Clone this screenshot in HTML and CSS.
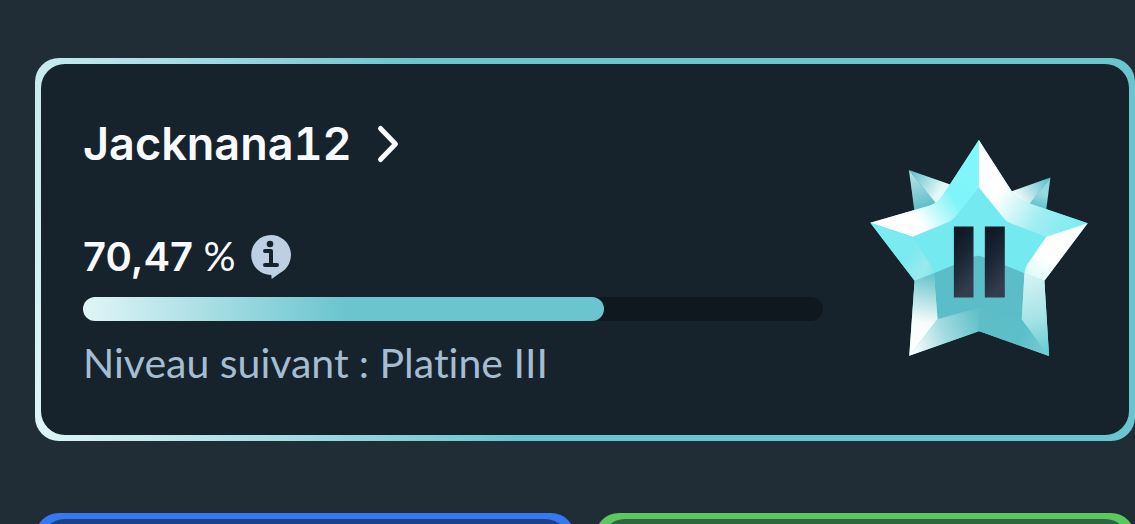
FILE: index.html
```html
<!DOCTYPE html>
<html lang="fr">
<head>
<meta charset="utf-8">
<meta name="viewport" content="width=device-width, initial-scale=1">
<title>Jacknana12</title>
<link rel="stylesheet" href="styles.css">
</head>
<body>
<main class="page">
  <section class="card platinum">
    <div class="card-body rank">
      <div class="details">
        <a class="player" href="#profile">
          <span>Jacknana12</span>
          <svg class="chevron" viewBox="0 0 24 40" aria-hidden="true"><path d="M4.500 4.500 L19.500 20 L4.500 35.500" fill="none" stroke="currentColor" stroke-width="5" stroke-linecap="round" stroke-linejoin="round"/></svg>
        </a>
        <div class="score">
          <span><span class="value">70,47</span> %</span>
          <button class="info" type="button" aria-label="Informations">
            <svg viewBox="0 0 120 132" aria-hidden="true">
              <path d="M60 0A60 60 0 0 1 88 113L62 132L61 120A60 60 0 1 1 60 0Z" fill="#bdd0e3"/>
              <circle cx="57" cy="27" r="10" fill="#17232c"/>
              <path d="M42 48H60V90M42 90H78" fill="none" stroke="#17232c" stroke-width="12" stroke-linecap="round" stroke-linejoin="round"/>
            </svg>
          </button>
        </div>
        <div class="track" role="progressbar" aria-label="Progression" aria-valuemin="0" aria-valuemax="100" aria-valuenow="70.47"><div class="fill" style="width:70.47%"></div></div>
        <p class="next">Niveau suivant&#8239;: Platine III</p>
      </div>
      <svg class="badge" viewBox="30 30 655 650" role="img" aria-label="Platine II">
        <defs>
          <linearGradient id="topL" gradientUnits="userSpaceOnUse" x1="355" y1="90" x2="50" y2="300"><stop offset="0" stop-color="#80f7fc"/><stop offset=".34" stop-color="#80f4f8"/><stop offset=".68" stop-color="#fff"/></linearGradient>
          <linearGradient id="topR" gradientUnits="userSpaceOnUse" x1="365" y1="150" x2="640" y2="310"><stop offset=".2" stop-color="#fff"/><stop offset=".65" stop-color="#a0edf1"/><stop offset="1" stop-color="#7decf2"/></linearGradient>
          <linearGradient id="armL" gradientUnits="userSpaceOnUse" x1="60" y1="290" x2="240" y2="400"><stop offset="0" stop-color="#7aedf2"/><stop offset=".55" stop-color="#7aeaf0"/><stop offset=".85" stop-color="#9aeaee"/><stop offset="1" stop-color="#80e8ed"/></linearGradient>
          <linearGradient id="armR" gradientUnits="userSpaceOnUse" x1="590" y1="320" x2="510" y2="450"><stop offset=".45" stop-color="#fff"/><stop offset="1" stop-color="#dcfafa"/></linearGradient>
          <linearGradient id="legL" gradientUnits="userSpaceOnUse" x1="210" y1="440" x2="165" y2="650"><stop offset="0" stop-color="#6ec6cd"/><stop offset=".65" stop-color="#f6fcfc"/><stop offset="1" stop-color="#fff"/></linearGradient>
          <linearGradient id="legR" gradientUnits="userSpaceOnUse" x1="500" y1="440" x2="560" y2="670"><stop offset="0" stop-color="#d3f3f4"/><stop offset=".55" stop-color="#a6e3e5"/><stop offset="1" stop-color="#65cbd2"/></linearGradient>
          <linearGradient id="foot" gradientUnits="userSpaceOnUse" x1="150" y1="660" x2="360" y2="580"><stop offset="0" stop-color="#fff"/><stop offset=".5" stop-color="#a4dce0"/><stop offset="1" stop-color="#64c1ca"/></linearGradient>
          <linearGradient id="footR" gradientUnits="userSpaceOnUse" x1="360" y1="560" x2="560" y2="660"><stop offset="0" stop-color="#5fbdc7"/><stop offset=".6" stop-color="#5bbfc9"/><stop offset="1" stop-color="#75cbd2"/></linearGradient>
          <linearGradient id="backL" gradientUnits="userSpaceOnUse" x1="150" y1="130" x2="260" y2="200"><stop offset="0" stop-color="#5fc1cb"/><stop offset=".8" stop-color="#e3f8f9"/></linearGradient>
          <linearGradient id="backL2" gradientUnits="userSpaceOnUse" x1="155" y1="130" x2="190" y2="240"><stop offset="0" stop-color="#b5e2e6"/><stop offset="1" stop-color="#5bbdc7"/></linearGradient>
          <linearGradient id="backR" gradientUnits="userSpaceOnUse" x1="565" y1="150" x2="475" y2="210"><stop offset="0" stop-color="#5fc1cb"/><stop offset="1" stop-color="#f2fcfc"/></linearGradient>
          <linearGradient id="backR2" gradientUnits="userSpaceOnUse" x1="565" y1="150" x2="535" y2="240"><stop offset="0" stop-color="#86d6dc"/><stop offset=".45" stop-color="#98dce0"/><stop offset="1" stop-color="#5bbdc7"/></linearGradient>
          <linearGradient id="bar" x1="0" y1="0" x2=".35" y2="1"><stop offset=".15" stop-color="#101924"/><stop offset=".55" stop-color="#1b2637"/><stop offset="1" stop-color="#333d4e"/></linearGradient>
        </defs>
        <path d="M147 120L271 164L245 222L230 225Z" fill="url(#backL)"/>
        <path d="M147 120L230 222L235 240H163Z" fill="url(#backL2)"/>
        <path d="M572 143L456 184L460 230H505Z" fill="url(#backR)"/>
        <path d="M572 143L503 230L559 243Z" fill="url(#backR2)"/>
        <path d="M357 30L456 184Q468 204 490 214L684 280L554 453L568 679L357 604L148 678L164 453L31 279L210 227Q232 219 245 202Z" fill="#74eaf0"/>
        <path d="M357 30V172L285 262Q276 271 264 277L158 321L31 279L210 227Q232 219 245 202Z" fill="url(#topL)"/>
        <path d="M357 30L456 184Q468 204 490 214L684 280L560 321L453 280Q438 275 430 263L357 172Z" fill="url(#topR)"/>
        <path d="M31 279L158 321L216 413L222 430L164 453Z" fill="url(#armL)"/>
        <path d="M684 280L560 321L504 402Q496 414 494 430L554 453Z" fill="url(#armR)"/>
        <path d="M222 430L345 379Q355 376 366 380L494 430L486 569L368 536H348L233 568Z" fill="#5bbdc7"/>
        <path d="M164 453L222 430L233 568L148 678Z" fill="url(#legL)"/>
        <path d="M554 453L494 430L486 569L568 679Z" fill="url(#legR)"/>
        <path d="M148 678L233 568L348 536H360V604Z" fill="url(#foot)"/>
        <path d="M358 536H368L486 569L568 679L357 604Z" fill="url(#footR)"/>
        <path d="M233 568L348 536H368L486 569" fill="none" stroke="#50aeb8" stroke-width="1"/>
        <path d="M282 290H341V503H282Z" fill="url(#bar)"/>
        <path d="M375 290H435V503H375Z" fill="url(#bar)"/>
      </svg>
    </div>
  </section>
  <div class="tiles">
    <section class="card blue"><div class="card-body tile"></div></section>
    <section class="card green"><div class="card-body tile"></div></section>
  </div>
</main>
</body>
</html>
```
FILE: styles.css
```css
* { box-sizing: border-box; }
body {
  margin: 0;
  background: #202d37;
  color: #f8faff;
  font-family: Lato, "Noto Sans", sans-serif;
  font-variant-ligatures: none;
}
.page {
  height: 100vh;
  overflow: hidden;
  padding: 58px 0 0 35px;
  display: flex;
  flex-direction: column;
  gap: 72px;
}
.card {
  flex-shrink: 0;
  padding: 6px;
  border-radius: 24px;
}
.card-body { border-radius: 24px; }
.platinum { background: linear-gradient(75deg, #e0f5f7 0%, #6bc5cf 40%); }
.rank {
  display: flex;
  align-items: center;
  gap: 47px;
  padding: 44px 41px 46px 42px;
  background: #17232c;
}
.details {
  flex: 1;
  min-width: 0;
  padding-top: 10px;
}
.player {
  display: flex;
  align-items: center;
  gap: 24px;
  color: inherit;
  font-family: Inter, sans-serif;
  font-size: 45px;
  font-weight: 600;
  font-variant-numeric: tabular-nums;
  line-height: 52px;
  text-decoration: none;
}
.chevron { width: 24px; height: 40px; }
.score {
  display: flex;
  align-items: center;
  gap: 16px;
  margin-top: 60px;
  font-size: 40px;
  line-height: 52px;
}
.value {
  font-family: Inter, sans-serif;
  font-weight: 600;
}
.info {
  display: flex;
  padding: 0;
  border: 0;
  background: none;
}
.info svg { width: 40px; height: 44px; }
.track {
  height: 24px;
  margin-top: 14px;
  border-radius: 12px;
  background: #10181f;
}
.fill {
  height: 100%;
  border-radius: 12px;
  background: linear-gradient(90deg, #e0f5f7, #6bc5cf 50%);
}
.next {
  margin: 16px 0 0;
  color: #a5bdd2;
  font-size: 41px;
  line-height: 52px;
}
.badge { flex: none; width: 218px; }
.tiles {
  display: grid;
  grid-template-columns: 1fr 1fr;
  gap: 20px;
}
.tile { height: 200px; }
.blue { background: #3478f2; }
.blue .tile { background: #1b4289; }
.green { background: #5ac85c; }
.green .tile { background: #2d6545; }
```
